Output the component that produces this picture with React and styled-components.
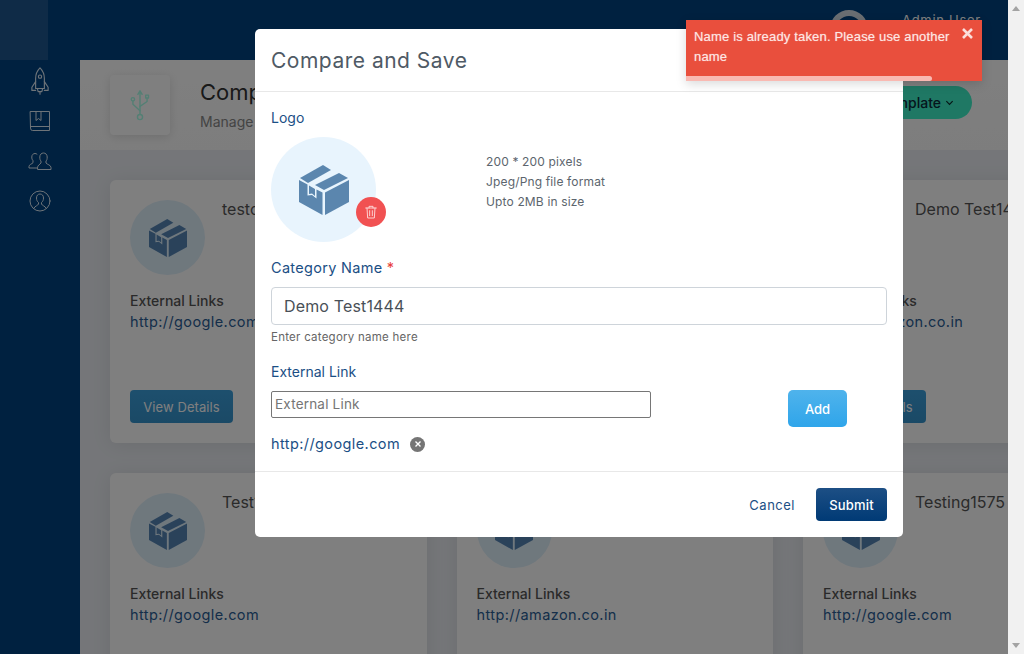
import styled, { createGlobalStyle } from "styled-components";

const GlobalStyle = createGlobalStyle`
  html, body { margin: 0; padding: 0; height: 100%; overflow: hidden; }
  * { box-sizing: border-box; }
  body { font-family: Inter, "Open Sans", sans-serif; color: #333; }
`;

const BoxIcon = ({ size, color }) => (
  <svg width={size} height={size} viewBox="0 0 50 50" fill={color}>
    <polygon points="1,13 24,0 32,5 9,18" />
    <polygon points="40,8 49,13 25,25 16,20" />
    <polygon points="10,20.5 16,24 16,31 13,28.5 10,29" />
    <polygon points="0,15 8.5,19.5 8.5,30.5 13,30 17.5,33.5 17.5,24.5 23.5,27.5 23.5,50 0,37" />
    <polygon points="26,27.5 50,15 50,37 26,50" />
  </svg>
);

const Line = ({ children, size = 24, color = "#dce8f2", width = 1 }) => (
  <svg width={size} height={size} viewBox="0 0 24 24" fill="none" stroke={color} strokeWidth={width} strokeLinecap="round" strokeLinejoin="round">
    {children}
  </svg>
);

const cards = [
  { title: "testcategory", link: "http://google.com" },
  { title: "Test1234", link: "http://amazon.co.in" },
  { title: "Demo Test1444", link: "http://amazon.co.in" },
  { title: "Test1500", link: "http://google.com", noButton: true },
  { title: "Test1520", link: "http://amazon.co.in", noButton: true },
  { title: "Testing1575", link: "http://google.com", noButton: true },
];

const App = () => {
  return (
    <>
      <GlobalStyle />
      <Screen>
        <Page>
          <TopBar>
            <LogoSlot />
            <UserBox>
              <Avatar />
              <UserText>
                <UserName>Admin User</UserName>
                <UserRole>Admin</UserRole>
              </UserText>
            </UserBox>
          </TopBar>
          <Body>
            <SideNav>
              <NavItem>
                <Line size={30} width={0.9}>
                  <path d="M12 1.500c2.500 2.500 3.500 5.500 3.500 8.500v8h-7v-8c0-3 1-6 3.500-8.500Z" />
                  <circle cx="12" cy="8.500" r="1.300" />
                  <path d="M8.500 12.500 5.500 17v2.500h3M15.500 12.500l3 4.500v2.500h-3M10 18.500l.5 2h3l.5-2M12 20.500v2" />
                </Line>
              </NavItem>
              <NavItem>
                <Line size={24}>
                  <path d="M2.500 2.500h19v19h-17a2 2 0 0 1-2-2Z" />
                  <path d="M2.500 17.500h19" />
                  <path d="M8 2.500v9l2.500-2 2.500 2v-9" />
                </Line>
              </NavItem>
              <NavItem>
                <Line size={24}>
                  <path d="M10 20.500H23v-2c0-2.500-4-3-5-4.500v-2c1-1 1.200-2 1.200-4 0-2.500-1.700-4-3.700-4s-3.700 1.500-3.700 4c0 2 .2 3 1.200 4v2c-1 1.500-3.500 2-3.500 4.500Z" />
                  <path d="M9 19H1v-1.500c0-2 3-2.500 4-3.800v-2C4 10.500 3.800 9.500 3.800 8c0-2.200 1.500-3.500 3.200-3.500.8 0 1.500.2 2 .7" />
                </Line>
              </NavItem>
              <NavItem>
                <Line size={24}>
                  <circle cx="12" cy="12" r="10" />
                  <path d="M6 19c1-2 4-2.500 4.500-4v-1.500C9.200 12.500 8.500 11 8.500 9c0-2.500 1.500-4 3.500-4s3.500 1.500 3.500 4c0 2-.7 3.500-2 4.500V15c.5 1.500 3.500 2 4.500 4" />
                </Line>
              </NavItem>
            </SideNav>
            <Main>
              <PageHead>
                <HeadTile>
                  <Line size={34} color="#a8ffe8">
                    <path d="M12 2v20M12 2l-1.500 2.500M12 2l1.500 2.500" />
                    <path d="M12 16l-5-4.500V9M12 13l5-3.500V7" />
                    <circle cx="12" cy="20.500" r="1.800" fill="#fff" />
                    <circle cx="7" cy="8" r="1.200" fill="#fff" />
                    <rect x="16" y="5" width="2" height="2" fill="#fff" />
                  </Line>
                </HeadTile>
                <HeadText>
                  <HeadTitle>Compare and Save</HeadTitle>
                  <HeadSub>Manage categories</HeadSub>
                </HeadText>
                <TemplateButton>
                  Template
                  <svg width="9" height="9" viewBox="0 0 10 10" fill="none" stroke="#0a2a2a" strokeWidth="1.300">
                    <path d="M1.500 3.500 5 7l3.500-3.500" />
                  </svg>
                </TemplateButton>
              </PageHead>
              <CardGrid>
                {cards.map((card) => (
                  <Card key={card.title}>
                    <CardTop>
                      <CardCircle>
                        <BoxIcon size={38} color="#5585b5" />
                      </CardCircle>
                      <CardTitle>{card.title}</CardTitle>
                    </CardTop>
                    <LinksLabel>External Links</LinksLabel>
                    <LinksValue>{card.link}</LinksValue>
                    {!card.noButton && <ViewButton>View Details</ViewButton>}
                  </Card>
                ))}
              </CardGrid>
            </Main>
          </Body>

          <Overlay>
            <Modal>
              <ModalHead>Compare and Save</ModalHead>
              <ModalBody>
                <FieldLabel>Logo</FieldLabel>
                <LogoRow>
                  <LogoCircle>
                    <BoxIcon size={50} color="#5b86ae" />
                    <TrashButton>
                      <Line size={16} color="#ffe3e3" width={1.300}>
                        <path d="M4 6h16M9 6V3.500h6V6M6 6l1 15h10l1-15M10 10v7.500M14 10v7.500" />
                      </Line>
                    </TrashButton>
                  </LogoCircle>
                  <LogoHelp>
                    <div>200 * 200 pixels</div>
                    <div>Jpeg/Png file format</div>
                    <div>Upto 2MB in size</div>
                  </LogoHelp>
                </LogoRow>
                <CategoryLabel>
                  Category Name <Required>*</Required>
                </CategoryLabel>
                <NameInput defaultValue="Demo Test1444" />
                <Hint>Enter category name here</Hint>
                <LinkLabel>External Link</LinkLabel>
                <LinkRow>
                  <LinkInput placeholder="External Link" />
                  <AddButton>Add</AddButton>
                </LinkRow>
                <Chip>
                  http://google.com
                  <ChipClose>
                    <svg width="8" height="8" viewBox="0 0 8 8" stroke="#fff" strokeWidth="1.400">
                      <path d="M1.500 1.500l5 5M6.500 1.500l-5 5" />
                    </svg>
                  </ChipClose>
                </Chip>
              </ModalBody>
              <ModalFoot>
                <CancelButton>Cancel</CancelButton>
                <SubmitButton>Submit</SubmitButton>
              </ModalFoot>
            </Modal>
          </Overlay>

          <Toast>
            <ToastText>Name is already taken. Please use another name</ToastText>
            <ToastClose>
              <svg width="11" height="11" viewBox="0 0 11 11" stroke="#fbdedb" strokeWidth="2.600">
                <path d="M1 1l9 9M10 1l-9 9" />
              </svg>
            </ToastClose>
            <ToastProgress />
          </Toast>
        </Page>
        <ScrollTrack>
          <ArrowUp />
          <ArrowDown />
        </ScrollTrack>
      </Screen>
    </>
  );
};

const Screen = styled.div`
  display: flex;
  width: 100%;
  height: 100vh;
  overflow: hidden;
`;
const Page = styled.div`
  position: relative;
  flex: 1;
  min-width: 0;
  display: flex;
  flex-direction: column;
  overflow: hidden;
  background: #fff;
`;
const ScrollTrack = styled.div`
  width: 16px;
  flex: none;
  background: #f1f1f1;
  display: flex;
  flex-direction: column;
  justify-content: space-between;
  align-items: center;
  padding: 6px 0;
`;
const ArrowUp = styled.div`
  border: 4px solid transparent;
  border-top: 0;
  border-bottom: 5px solid #a3a3a3;
`;
const ArrowDown = styled.div`
  border: 4px solid transparent;
  border-bottom: 0;
  border-top: 5px solid #a3a3a3;
`;

const TopBar = styled.header`
  height: 60px;
  flex: none;
  display: flex;
  justify-content: space-between;
  background: #004280;
`;
const LogoSlot = styled.div`
  width: 48px;
  background: #1e568e;
`;
const UserBox = styled.div`
  display: flex;
  align-items: flex-start;
  gap: 34px;
  padding: 10px 0 0;
  margin-right: -16px;
  width: 194px;
`;
const Avatar = styled.div`
  width: 38px;
  height: 38px;
  flex: none;
  border-radius: 50%;
  border: 6px solid #d4dde5;
  background: #004280;
`;
const UserText = styled.div`
  color: #fff;
  font-size: 13px;
  line-height: 20px;
  letter-spacing: 0.7px;
`;
const UserName = styled.div``;
const UserRole = styled.div`
  text-align: right;
`;

const Body = styled.div`
  flex: 1;
  display: flex;
  min-height: 0;
`;
const SideNav = styled.nav`
  width: 80px;
  flex: none;
  background: #004280;
  display: flex;
  flex-direction: column;
  align-items: center;
  padding-top: 1px;
`;
const NavItem = styled.div`
  height: 40px;
  display: flex;
  align-items: center;
  justify-content: center;
`;
const Main = styled.main`
  flex: 1;
  min-width: 0;
  overflow: hidden;
  background: #eaedf2;
`;
const PageHead = styled.div`
  height: 90px;
  display: flex;
  align-items: flex-start;
  padding: 15px 36px 0 30px;
  background: linear-gradient(#fff, #fbfbfb);
`;
const HeadTile = styled.div`
  width: 60px;
  height: 60px;
  flex: none;
  border-radius: 4px;
  background: #fff;
  box-shadow: 0 2px 10px rgba(0, 0, 0, 0.12);
  display: flex;
  align-items: center;
  justify-content: center;
`;
const HeadText = styled.div`
  margin-left: 30px;
  flex: 1;
`;
const HeadTitle = styled.div`
  font-size: 22px;
  line-height: 34px;
  color: #333;
`;
const HeadSub = styled.div`
  margin-top: 2px;
  font-size: 14px;
  line-height: 22px;
  color: #888;
`;
const TemplateButton = styled.button`
  margin-top: 11px;
  height: 33px;
  width: 150px;
  border: 0;
  border-radius: 17px;
  background: #3ef0c8;
  color: #0a2a3a;
  font: 500 14px Inter, sans-serif;
  display: flex;
  align-items: center;
  justify-content: flex-end;
  gap: 4px;
  padding: 0 18px;
`;
const CardGrid = styled.div`
  display: grid;
  grid-template-columns: repeat(3, 316.500px);
  gap: 30px;
  padding: 30px;
  width: 1100px;
`;
const Card = styled.section`
  height: 263px;
  background: #fff;
  border-radius: 6px;
  box-shadow: 0 2px 20px rgba(0, 0, 0, 0.08);
  padding: 20px;
`;
const CardTop = styled.div`
  display: flex;
  gap: 17px;
`;
const CardCircle = styled.div`
  width: 75px;
  height: 75px;
  flex: none;
  border-radius: 50%;
  background: #dff0fb;
  display: flex;
  align-items: center;
  justify-content: center;
`;
const CardTitle = styled.div`
  font-size: 16px;
  line-height: 20px;
  margin-top: -1px;
  color: #555;
`;
const LinksLabel = styled.div`
  margin-top: 16px;
  font-size: 14px;
  font-weight: 500;
  line-height: 20px;
  color: #555;
`;
const LinksValue = styled.div`
  font-size: 14.500px;
  line-height: 22px;
  letter-spacing: 0.4px;
  color: #2a5d95;
`;
const ViewButton = styled.button`
  margin-top: 57px;
  height: 33px;
  width: 103px;
  border: 0;
  border-radius: 4px;
  background: linear-gradient(#3b9fdc, #3593cc);
  color: #fff;
  font: 13px Inter, sans-serif;
  letter-spacing: 0.1px;
`;

const Overlay = styled.div`
  position: absolute;
  inset: 0;
  background: rgba(0, 0, 0, 0.5);
  padding: 29px 0 0 255px;
`;
const Modal = styled.div`
  width: 648px;
  height: 508px;
  background: #fff;
  border-radius: 5px;
  display: flex;
  flex-direction: column;
`;
const ModalHead = styled.div`
  height: 63px;
  flex: none;
  border-bottom: 1px solid #e8e8e8;
  padding: 0 16px;
  display: flex;
  align-items: center;
  font-size: 21px;
  letter-spacing: 0.5px;
  color: #4f5a65;
`;
const ModalBody = styled.div`
  flex: 1;
  padding: 16px 16px 0;
`;
const FieldLabel = styled.div`
  font-size: 14px;
  line-height: 20px;
  color: #1b4f85;
`;
const LogoRow = styled.div`
  display: flex;
  align-items: flex-start;
  margin-top: 9px;
`;
const LogoCircle = styled.div`
  position: relative;
  width: 105px;
  height: 105px;
  flex: none;
  border-radius: 50%;
  background: #e8f4fd;
  display: flex;
  align-items: center;
  justify-content: center;
`;
const TrashButton = styled.div`
  position: absolute;
  left: 85px;
  top: 60px;
  width: 30px;
  height: 30px;
  border-radius: 50%;
  background: #f15152;
  display: flex;
  align-items: center;
  justify-content: center;
`;
const LogoHelp = styled.div`
  margin: 15px 0 0 110px;
  font-size: 12px;
  line-height: 20px;
  letter-spacing: 0.15px;
  color: #5c656d;
`;
const CategoryLabel = styled(FieldLabel)`
  margin-top: 16px;
  font-size: 14.500px;
  letter-spacing: 0.3px;
`;
const Required = styled.span`
  color: #e8403a;
`;
const NameInput = styled.input`
  display: block;
  width: 616px;
  height: 38px;
  margin-top: 9px;
  padding: 0 12px;
  border: 1px solid #ced4da;
  border-radius: 4px;
  font: 16px Inter, sans-serif;
  letter-spacing: 0.15px;
  color: #495057;
`;
const Hint = styled.div`
  margin-top: 4px;
  font-size: 11.500px;
  line-height: 16px;
  letter-spacing: 0.25px;
  color: #666;
`;
const LinkLabel = styled(FieldLabel)`
  margin-top: 17px;
`;
const LinkRow = styled.div`
  display: flex;
  align-items: flex-start;
  margin-top: 9px;
`;
const LinkInput = styled.input`
  width: 380px;
  height: 27px;
  padding: 0 3px 2px;
  border: 1px solid #767676;
  border-radius: 2px;
  font: 13.500px Inter, sans-serif;
  letter-spacing: 0.2px;
  &::placeholder { color: #757575; }
`;
const AddButton = styled.button`
  width: 59px;
  height: 37px;
  margin-left: 137px;
  margin-top: -1px;
  border: 0;
  border-radius: 5px;
  background: linear-gradient(#4fb3ec, #2fa5ea);
  color: #fff;
  font: 500 13px Inter, sans-serif;
`;
const Chip = styled.div`
  display: flex;
  align-items: center;
  gap: 10px;
  margin-top: 7px;
  font-size: 14.500px;
  line-height: 20px;
  letter-spacing: 0.4px;
  color: #1b4f85;
`;
const ChipClose = styled.span`
  width: 15px;
  height: 15px;
  border-radius: 50%;
  background: #757575;
  display: flex;
  align-items: center;
  justify-content: center;
`;
const ModalFoot = styled.div`
  height: 66px;
  flex: none;
  border-top: 1px solid #e8e8e8;
  display: flex;
  align-items: center;
  justify-content: flex-end;
  gap: 21px;
  padding: 0 16px;
`;
const CancelButton = styled.button`
  border: 0;
  padding: 0;
  background: none;
  color: #1b4f85;
  font: 13px Inter, sans-serif;
  letter-spacing: 0.5px;
`;
const SubmitButton = styled.button`
  width: 71px;
  height: 33px;
  border: 0;
  border-radius: 4px;
  background: linear-gradient(#1d4f85, #003a75);
  color: #fff;
  font: 500 13px Inter, sans-serif;
  letter-spacing: 0.2px;
`;

const Toast = styled.div`
  position: absolute;
  left: 686px;
  top: 20px;
  width: 296px;
  height: 61px;
  padding: 7px 30px 0 8px;
  background: #e94f3d;
  box-shadow: 0 3px 10px rgba(0, 0, 0, 0.15);
`;
const ToastText = styled.div`
  font-family: "Liberation Sans", Arial, sans-serif;
  font-size: 13px;
  line-height: 20px;
  letter-spacing: 0.17px;
  color: #fde6e3;
  text-shadow: 0 0 1px rgba(255, 255, 255, 0.5);
`;
const ToastClose = styled.span`
  position: absolute;
  right: 9px;
  top: 8px;
  display: flex;
`;
const ToastProgress = styled.div`
  position: absolute;
  left: 0;
  bottom: 0;
  width: 246px;
  height: 5px;
  border-radius: 0 3px 3px 0;
  background: #f9b9b2;
`;

export default App;
